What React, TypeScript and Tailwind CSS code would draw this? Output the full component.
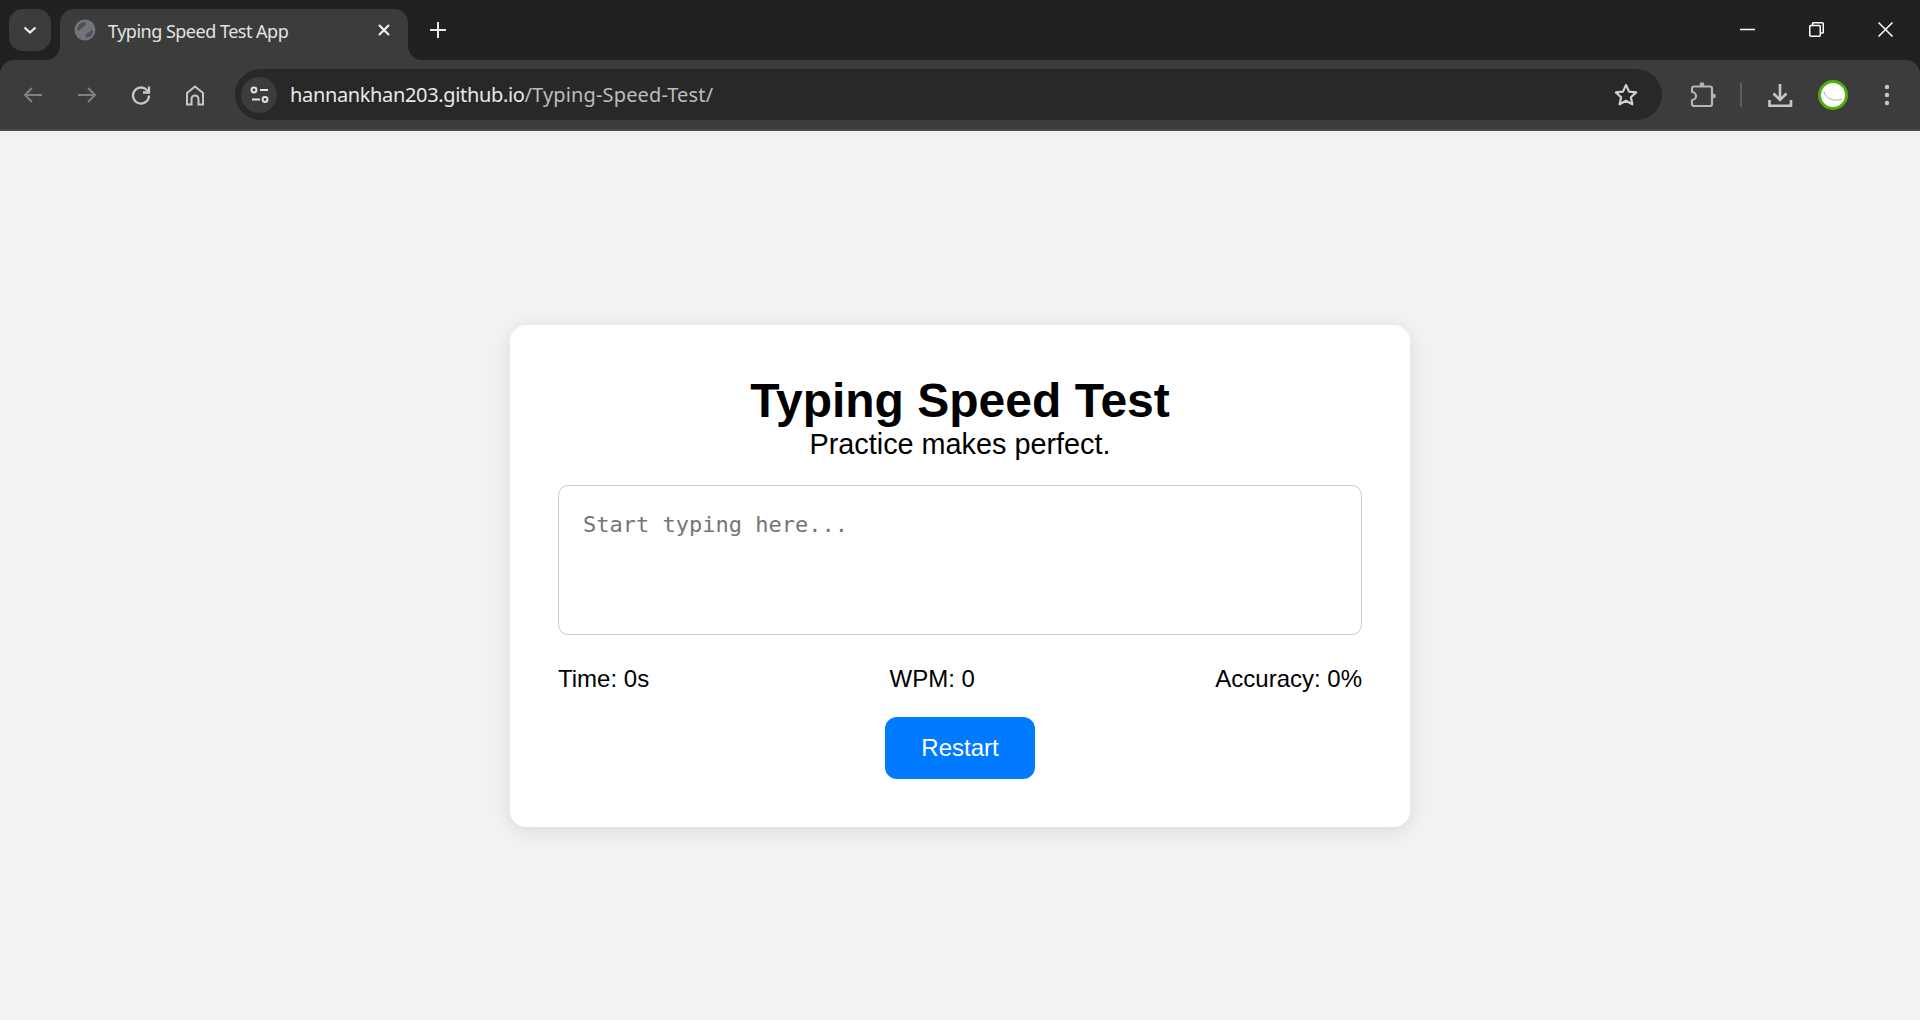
import React from "react";

const Tab = () => (
  <div className="relative flex items-center w-[348px] h-[51px] ml-[9px] mt-[9px] self-start bg-[#3c3c3c] rounded-t-[14px] pl-[14px] pr-[17px] pb-[9px]">
    <div className="absolute bottom-0 -left-[14px] w-[14px] h-[14px] bg-[#3c3c3c]"><div className="w-full h-full bg-[#202221] rounded-br-[14px]" /></div>
    <div className="absolute bottom-0 -right-[14px] w-[14px] h-[14px] bg-[#3c3c3c]"><div className="w-full h-full bg-[#202221] rounded-bl-[14px]" /></div>
    <svg width="22" height="22" viewBox="0 0 22 22" className="shrink-0">
      <circle cx="11" cy="11" r="10.500" fill="#70757a" />
      <path d="M3 10a8 8 0 0 1 8-7c1 2 .5 4-1.500 5-2 .5-3 1.500-3.500 3.500C5 12 4 11.500 3 10zM19 12a8 8 0 0 1-7 7c-1-2-.5-4 1.500-5 2-.5 2.500-1.500 3-3 1 0 2 .5 2.500 1z" fill="#4d5054" />
    </svg>
    <span className="ml-[12px] mt-[2px] text-[18px] text-[#e3e3e3] font-['Noto_Sans',sans-serif] tracking-[-0.5px] whitespace-nowrap">Typing Speed Test App</span>
    <svg width="14" height="14" viewBox="0 0 14 14" className="ml-auto" stroke="#f0f0f0" strokeWidth="2.200" fill="none">
      <path d="M2 2l10 10M12 2L2 12" />
    </svg>
  </div>
);

const Nav = ({ d, color = "#c7c7c7", cls = "" }: { d: string; color?: string; cls?: string }) => (
  <svg width="24" height="24" viewBox="0 0 24 24" fill="none" stroke={color} strokeWidth="2" className={cls}>
    <path d={d} />
  </svg>
);

export default function App() {
  return (
    <div className="flex flex-col w-full h-[1020px] bg-[#f2f2f2] overflow-hidden">
      <header className="flex flex-col h-[131px] shrink-0 bg-[#202221]">
        <div className="flex items-start h-[60px] shrink-0">
          <div className="flex items-center justify-center w-[42px] h-[42px] ml-[9px] mt-[9px] rounded-[14px] bg-[#3c3c3c]">
            <svg width="14" height="14" viewBox="0 0 14 14" fill="none" stroke="#f0f0f0" strokeWidth="2.200"><path d="M1.500 4.500l5.500 5 5.500-5" /></svg>
          </div>
          <Tab />
          <svg width="16" height="16" viewBox="0 0 16 16" className="ml-[22px] mt-[22px]" stroke="#e8e8e8" strokeWidth="2" fill="none"><path d="M8 0v16M0 8h16" /></svg>
          <div className="ml-auto flex items-center gap-[54px] mt-[22px] mr-[27px]">
            <svg width="15" height="15" viewBox="0 0 15 15" stroke="#fff" strokeWidth="1.500" fill="none"><path d="M0 7.500h15" /></svg>
            <svg width="15" height="15" viewBox="0 0 15 15" stroke="#fff" strokeWidth="1.500" fill="none"><rect x="0.750" y="3.500" width="10.500" height="10.750" rx="1" /><path d="M3.500 3.500V1.500a.75.75 0 0 1 .75-.75h9a1 1 0 0 1 1 1v8.500a.75.75 0 0 1-.75.75H11.500" /></svg>
            <svg width="15" height="15" viewBox="0 0 15 15" stroke="#fff" strokeWidth="1.500" fill="none"><path d="M0.500 0.500l14 14M14.500 0.500l-14 14" /></svg>
          </div>
        </div>
        <div className="flex items-center h-[71px] shrink-0 bg-[#3c3c3c] rounded-t-[14px] border-b-[2px] border-[#4a4a4a]">
          <Nav cls="ml-[21px]" color="#7f7f7f" d="M21 12H4M11 5l-7 7 7 7" />
          <Nav cls="ml-[30px]" color="#7f7f7f" d="M3 12h17M13 5l7 7-7 7" />
          <svg width="24" height="24" viewBox="0 0 24 24" fill="none" stroke="#c7c7c7" strokeWidth="2.300" className="ml-[30px]"><path d="M20 12.500a8 8 0 1 1-2.400-5.700L20 9" /><path d="M20 3.500V9.500H14" /></svg>
          <svg width="24" height="24" viewBox="0 0 24 24" fill="none" stroke="#c7c7c7" strokeWidth="2" className="ml-[30px]"><path d="M4 21.500V10L12 3.500 20 10V21.500H15.500V16a3.500 3.500 0 0 0-7 0V21.500z" /></svg>
          <div className="flex items-center flex-1 h-[51px] ml-[28px] rounded-full bg-[#282828] pl-[6px] pr-[23px]">
            <div className="flex items-center justify-center w-[36px] h-[36px] rounded-full bg-[#3c3c3c]">
              <svg width="20" height="20" viewBox="0 0 20 20" fill="none" stroke="#e3e3e3" strokeWidth="2"><circle cx="5" cy="5" r="2.400" /><path d="M11 5h8M3 14.500h8" /><circle cx="16" cy="14.500" r="2.400" /></svg>
            </div>
            <span className="ml-[13px] text-[20px] font-['Noto_Sans',sans-serif] tracking-[-0.35px] text-[#e8e8e8] whitespace-nowrap">hannankhan203.github.io<span className="text-[#bdbdbd] tracking-[0.15px]">/Typing-Speed-Test/</span></span>
            <svg width="26" height="26" viewBox="0 0 24 24" className="ml-auto" fill="none" stroke="#d0d0d0" strokeWidth="2" strokeLinejoin="round"><path d="M12 2.800l2.800 6.100 6.600.7-4.900 4.500 1.400 6.500L12 17.300l-5.900 3.300 1.400-6.500-4.900-4.500 6.600-.7z" /></svg>
          </div>
          <svg width="26" height="26" viewBox="0 0 26 26" fill="none" stroke="#b5b5b5" strokeWidth="2.200" strokeLinejoin="round" className="ml-[28px]">
            <path d="M4 4.500H20a2 2 0 0 1 2 2V22a2 2 0 0 1-2 2H4a2 2 0 0 1-2-2V18a4 4 0 0 0 0-8V6.500a2 2 0 0 1 2-2z" />
            <circle cx="12" cy="2.500" r="2.300" fill="#b5b5b5" stroke="none" />
            <circle cx="23.500" cy="14" r="2.300" fill="#b5b5b5" stroke="none" />
          </svg>
          <div className="w-[2px] h-[24px] ml-[24px] bg-[#5f5f5f]" />
          <svg width="26" height="26" viewBox="0 0 26 26" fill="none" stroke="#c7c7c7" strokeWidth="2.600" className="ml-[25px]"><path d="M13 2V18M6.500 11.500L13 18l6.500-6.500M2.500 18V23.700H24V18" /></svg>
          <div className="flex items-center justify-center w-[30px] h-[30px] ml-[25px] rounded-full bg-white border-[3px] border-[#4fb00c]">
            <svg width="24" height="24" viewBox="0 0 24 24" fill="none" stroke="#aaaaaa" strokeWidth="1"><path d="M3 9C5 16 14 19 21 16" /></svg>
          </div>
          <svg width="6" height="24" viewBox="0 0 6 24" fill="#c7c7c7" className="ml-[36px] mr-[30px]"><circle cx="3" cy="4" r="2.200" /><circle cx="3" cy="12" r="2.200" /><circle cx="3" cy="20" r="2.200" /></svg>
        </div>
      </header>
      <main className="flex flex-1 items-center justify-center">
        <div className="flex flex-col items-center w-[900px] p-[48px] bg-white rounded-[16px] shadow-[0_4px_20px_rgba(0,0,0,0.1)] font-['Liberation_Sans',Arial,sans-serif] text-black">
          <h1 className="text-[48px] leading-[55px] font-bold">Typing Speed Test</h1>
          <p className="text-[28.8px] leading-[33px]">Practice makes perfect.</p>
          <textarea
            readOnly
            placeholder="Start typing here..."
            className="w-full h-[150px] mt-[24px] p-[24px] border border-[#cccccc] rounded-[10px] resize-none outline-none text-[22px] leading-[29px] font-['DejaVu_Sans_Mono',monospace] placeholder:text-[#757575]"
          />
          <div className="flex justify-between w-full mt-[30px] text-[24px] leading-[28px]">
            <span>Time: 0s</span>
            <span>WPM: 0</span>
            <span>Accuracy: 0%</span>
          </div>
          <button className="w-[150px] h-[62px] mt-[24px] rounded-[12px] bg-[#007bff] text-white text-[24px]">Restart</button>
        </div>
      </main>
    </div>
  );
}
